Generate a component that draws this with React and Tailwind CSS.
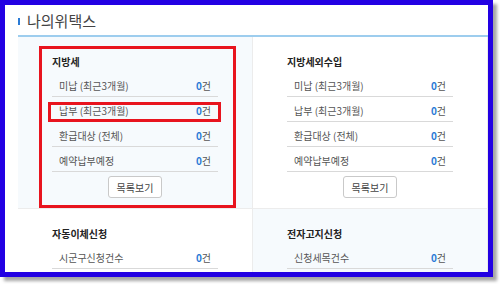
const font = { fontFamily: '"Noto Sans CJK KR", "Noto Sans", sans-serif' };

function Row({ label, count, mark }) {
  return (
    <div className="relative flex h-[25px] items-end justify-between border-b border-[#d9d9d9] pb-[3px] pl-[7px] pr-[7px]">
      <span className="text-[10px] leading-[14px] text-[#555]">{label}</span>
      <span className="text-[10px] leading-[14px] text-[#555]">
        <b className="text-[#2b7bd6]">{count}</b>건
      </span>
      {mark && (
        <div className="pointer-events-none absolute -left-[4px] -right-[3px] top-[5px] -bottom-[1px] border-[3px] border-[#e8141e]" />
      )}
    </div>
  );
}

function Panel({ title, rows, tint, button, frame }) {
  return (
    <div
      className={`relative border-b border-r border-[#ececec] px-[34px] pt-[18px] pb-[10px] ${
        tint ? "bg-[#f6fafd]" : "bg-white"
      }`}
    >
      <h3 className="text-[10px] font-bold leading-[14px] text-[#222]">{title}</h3>
      <div className="mt-[3px]">
        {rows.map((r) => (
          <Row key={r.label} {...r} />
        ))}
      </div>
      {button && (
        <div className="mt-[4px] flex justify-center">
          <button className="h-[22px] w-[54px] rounded-[3px] border border-[#c9c9c9] bg-white text-[10px] text-[#444]">
            목록보기
          </button>
        </div>
      )}
      {frame && (
        <div className="pointer-events-none absolute left-[21px] right-[16px] top-[9px] bottom-0 border-[3px] border-[#e8141e]" />
      )}
    </div>
  );
}

const taxRows = (mark) => [
  { label: "미납 (최근3개월)", count: 0 },
  { label: "납부 (최근3개월)", count: 0, mark },
  { label: "환급대상 (전체)", count: 0 },
  { label: "예약납부예정", count: 0 },
];

export default function App() {
  return (
    <div className="h-[284px] w-[500px] overflow-hidden bg-white" style={font}>
      <div className="h-[277px] w-[493px] overflow-hidden border-[5px] border-[#2200e3] bg-white shadow-[4px_4px_3px_rgba(0,0,0,0.35)]">
        <div className="pl-[13px]">
          <div className="flex h-[32px] items-center gap-[7px] border-b-2 border-[#9dcdee] pt-[2px]">
            <span className="h-[7px] w-[2px] bg-[#2b7bd6]" />
            <h2 className="text-[15px] leading-[20px] text-[#444]">나의위택스</h2>
          </div>
          <div className="grid grid-cols-2">
            <Panel title="지방세" rows={taxRows(true)} tint button frame />
            <Panel title="지방세외수입" rows={taxRows(false)} button />
            <Panel title="자동이체신청" rows={[{ label: "시군구신청건수", count: 0 }]} />
            <Panel title="전자고지신청" rows={[{ label: "신청세목건수", count: 0 }]} tint />
          </div>
        </div>
      </div>
    </div>
  );
}
